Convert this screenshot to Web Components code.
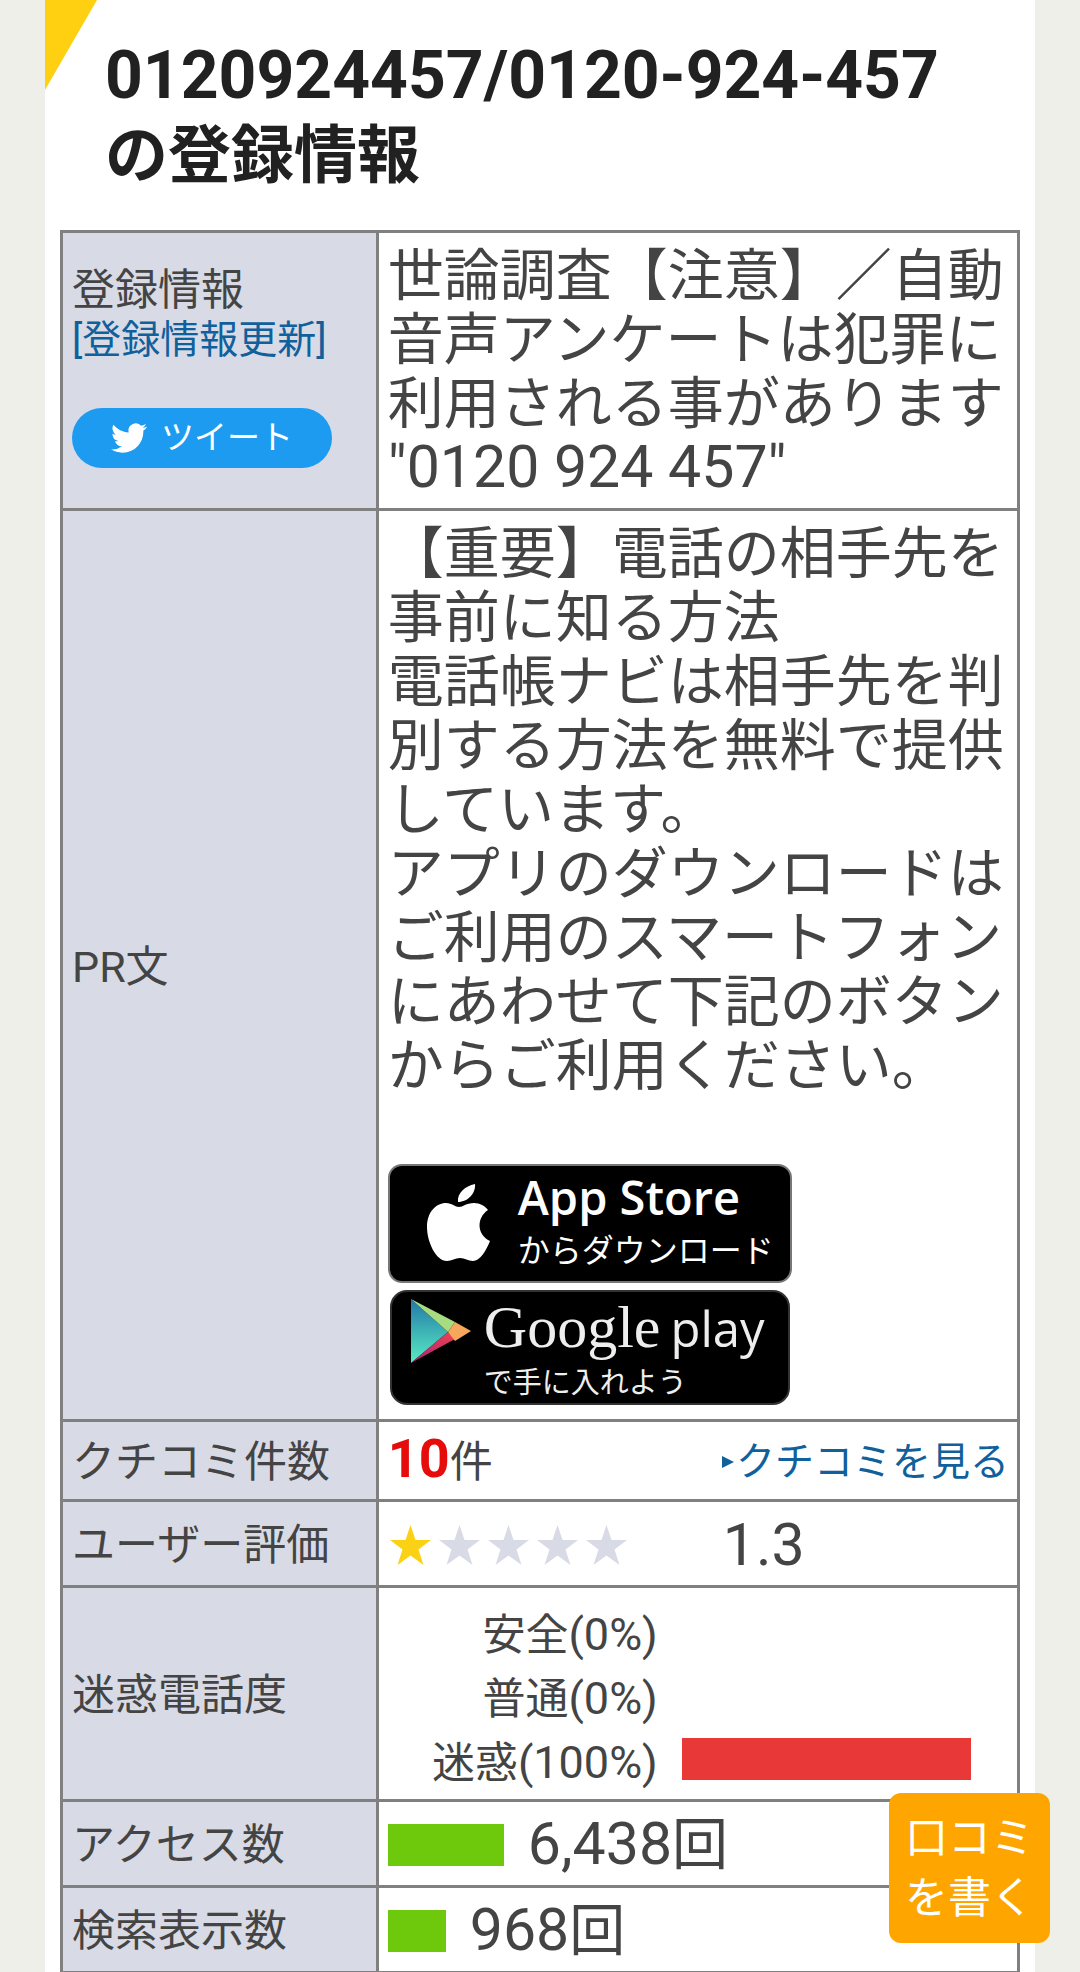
<!DOCTYPE html>
<html lang="ja">
<head>
  <meta charset="utf-8">
  <meta name="viewport" content="width=device-width, initial-scale=1">
  <title>0120924457/0120-924-457の登録情報</title>
  <style>
    body {
      margin: 0;
      background: #eeefe8;
      color: #444;
      font-family: Roboto, "Noto Sans CJK JP", sans-serif;
      font-size: 56px;
      line-height: 64px;
      text-spacing-trim: space-all;
    }
  </style>
</head>
<body>
  <phone-page>
    <page-title slot="title" number="0120924457/0120-924-457">の登録情報</page-title>
    <phone-info></phone-info>
  </phone-page>
  <review-button></review-button>

  <script>
    (function () {
      // registers an element whose shadow root is cloned from a template
      function define(name, html, setup) {
        const template = document.createElement('template')
        template.innerHTML = html
        customElements.define(name, class extends HTMLElement {
          constructor() {
            super()
            this.attachShadow({ mode: 'open' })
            this.shadowRoot.appendChild(template.content.cloneNode(true))
          }

          connectedCallback() {
            if (setup) setup(this, this.shadowRoot)
          }
        })
      }

      define('phone-page', `
        <style>
          :host {
            display: block;
            padding: 0 45px;
          }

          main {
            position: relative;
            padding: 0 15px;
            background: #fff;
          }

          .corner {
            position: absolute;
            top: 0;
            left: 0;
            width: 52px;
            height: 90px;
            background: #ffd012;
            clip-path: polygon(0 0, 100% 0, 0 100%);
          }
        </style>

        <main>
          <div class="corner"></div>
          <slot name="title"></slot>
          <slot></slot>
        </main>
      `)

      define('page-title', `
        <style>
          :host {
            display: block;
            padding: 36px 45px 34px;
          }

          h1 {
            margin: 0;
            color: #212121;
            font-size: 63px;
            line-height: 80px;
          }

          span {
            display: block;
            font-size: 66px;
          }
        </style>

        <h1><span></span><slot></slot></h1>
      `, (host, root) => {
        root.querySelector('span').textContent = host.getAttribute('number')
      })

      define('tweet-button', `
        <style>
          :host {
            display: block;
          }

          button {
            display: flex;
            align-items: center;
            justify-content: center;
            gap: 14px;
            width: 260px;
            height: 60px;
            padding: 0;
            border: 0;
            border-radius: 30px;
            background: #1d9bf0;
            color: #fff;
            font: inherit;
            font-size: 33px;
            line-height: 44px;
          }

          svg {
            width: 36px;
            height: 36px;
            fill: currentColor;
          }
        </style>

        <button type="button">
          <svg viewBox="0 0 24 24" aria-hidden="true">
            <path d="M23.95 4.57a10 10 0 0 1-2.82.78 4.96 4.96 0 0 0 2.16-2.72c-.95.55-2 .96-3.13 1.18a4.92 4.92 0 0 0-8.38 4.48C7.69 8.1 4.07 6.13 1.64 3.16a4.92 4.92 0 0 0 1.52 6.57 4.9 4.9 0 0 1-2.23-.61v.06a4.92 4.92 0 0 0 3.95 4.83 5 5 0 0 1-2.21.08 4.94 4.94 0 0 0 4.6 3.42A9.87 9.87 0 0 1 0 19.54a13.99 13.99 0 0 0 7.56 2.21c9.05 0 14-7.5 14-13.98 0-.21 0-.42-.02-.63a9.94 9.94 0 0 0 2.46-2.55z"/>
          </svg>
          <slot></slot>
        </button>
      `)

      define('app-store-badge', `
        <style>
          :host {
            display: block;
          }

          a {
            box-sizing: border-box;
            display: flex;
            align-items: center;
            gap: 28px;
            width: 404px;
            height: 119px;
            padding: 0 0 2px 36px;
            border: 2px solid #777;
            border-radius: 14px;
            background: #000;
            color: #fff;
            text-decoration: none;
          }

          svg {
            width: 64px;
            height: 80px;
            fill: #fff;
          }

          span {
            display: block;
            white-space: nowrap;
          }

          .store {
            font: 600 47px/56px "Open Sans", sans-serif;
          }

          .note {
            font-size: 32px;
            line-height: 52px;
          }
        </style>

        <a href="#app-store">
          <svg viewBox="0 0 64 80" aria-hidden="true">
            <path d="M49 1c1 9-7 18-17 18C31 10 39 3 49 1zM33 24c4 0 7-4 15-4 6 0 11 3 14 7-12 8-11 25 2 31-4 10-10 20-17 20-5 0-8-3-13-3s-8 3-13 3C10 78 1 59 1 44 1 29 10 20 20 20c6 0 9 4 13 4z"/>
          </svg>
          <div>
            <span class="store">App Store</span>
            <span class="note">からダウンロード</span>
          </div>
        </a>
      `)

      define('google-play-badge', `
        <style>
          :host {
            display: block;
          }

          a {
            box-sizing: border-box;
            display: flex;
            align-items: flex-start;
            gap: 13px;
            width: 400px;
            height: 115px;
            margin-left: 2px;
            padding: 7px 0 0 19px;
            border: 2px solid #333;
            border-radius: 17px;
            background: #000;
            color: #eee;
            text-decoration: none;
          }

          svg {
            width: 60px;
            height: 64px;
          }

          span {
            display: block;
            white-space: nowrap;
          }

          .store {
            display: flex;
            align-items: baseline;
            gap: 10px;
            height: 64px;
            font: 60px/56px "Liberation Serif", serif;
          }

          .play {
            font: 49px/56px "Open Sans", sans-serif;
          }

          .note {
            font-size: 29px;
            line-height: 40px;
          }
        </style>

        <a href="#google-play">
          <svg viewBox="0 0 60 64" aria-hidden="true">
            <defs>
              <linearGradient id="blue" x1="0" y1="0" x2="0" y2="1">
                <stop offset="0" stop-color="#2377a8"/>
                <stop offset="1" stop-color="#58edc2"/>
              </linearGradient>
              <linearGradient id="red" x1="1" y1="0" x2="0" y2="1">
                <stop offset="0" stop-color="#ee4250"/>
                <stop offset="1" stop-color="#a52179"/>
              </linearGradient>
            </defs>
            <path fill="url(#blue)" d="M0 0l37 33L0 64z"/>
            <path fill="#a8dc80" d="M0 0l44 23-7 10z"/>
            <path fill="url(#red)" d="M37 33l7 7L0 64z"/>
            <path fill="#f6a75b" d="M44 23l16 9-16 10-7-9z"/>
          </svg>
          <div>
            <span class="store">Google <span class="play">play</span></span>
            <span class="note">で手に入れよう</span>
          </div>
        </a>
      `)

      define('star-rating', `
        <style>
          :host {
            display: flex;
            gap: 8px;
          }

          svg {
            width: 41px;
            height: 40px;
            fill: #d8dbe5;
          }

          svg.on {
            fill: #fbd116;
          }
        </style>
      `, (host, root) => {
        const value = Math.floor(host.getAttribute('value'))
        for (let i = 0; i < 5; i++) {
          root.innerHTML += `
            <svg class="${i < value ? 'on' : ''}" viewBox="0 0 41 40" aria-hidden="true">
              <path d="M20.500 0l5 15H41L28.500 24.500 33.500 40l-13-9.500L7.500 40l5-15.500L0 15h15.500z"/>
            </svg>
          `
        }
      })

      define('meter-bar', `
        <style>
          :host {
            display: block;
            flex: none;
            height: 42px;
            background: var(--bar-color, #6ec80c);
          }
        </style>
      `, host => {
        host.style.width = host.getAttribute('width')
      })

      define('phone-info', `
        <style>
          :host {
            display: block;
          }

          table {
            width: 100%;
            border-collapse: collapse;
          }

          th,
          td {
            padding: 11px 8px 8px 9px;
            border: 3px solid #808080;
            text-align: left;
          }

          th {
            width: 33%;
            box-sizing: border-box;
            background: #d8dbe5;
            font-size: 43px;
            line-height: 50px;
            font-weight: normal;
          }

          a {
            color: #10609c;
            text-decoration: none;
          }

          p {
            margin: 0;
          }

          .update {
            display: block;
            margin-bottom: 43px;
            font-size: 39px;
          }

          tweet-button {
            margin-bottom: 12px;
          }

          .num {
            font-size: 59px;
            line-height: 0;
          }

          .badges {
            display: grid;
            gap: 7px;
            padding: 66px 0 6px;
          }

          .reviews,
          .rating,
          .count {
            display: flex;
            align-items: center;
          }

          .reviews {
            justify-content: space-between;
            font-size: 43px;
            line-height: 58px;
          }

          .reviews b {
            color: #e60c0c;
            font-size: 54px;
            line-height: 0;
          }

          .reviews a {
            display: flex;
            align-items: center;
            gap: 2px;
            font-size: 39px;
          }

          .reviews svg {
            width: 12px;
            height: 12px;
            fill: currentColor;
          }

          .rating {
            gap: 96px;
            min-height: 64px;
            padding-left: 2px;
          }

          .levels {
            display: grid;
            grid-template-columns: 270px 1fr;
            align-items: center;
            gap: 0 24px;
            margin: 0 38px 0 0;
          }

          .levels dt {
            text-align: right;
            white-space: nowrap;
          }

          .levels dd {
            margin: 0;
          }

          .levels small {
            font-size: 43px;
            line-height: 0;
          }

          .levels .num {
            font-size: 45px;
          }

          .levels meter-bar {
            --bar-color: #e93838;
          }

          .count {
            gap: 24px;
          }
        </style>

        <table>
          <tr>
            <th scope="row">
              登録情報
              <a class="update" href="#update">[登録情報更新]</a>
              <tweet-button>ツイート</tweet-button>
            </th>
            <td>
              世論調査【注意】／自動音声アンケートは犯罪に利用される事があります<br><span class="num">"0120 924 457"</span>
            </td>
          </tr>
          <tr>
            <th scope="row">PR文</th>
            <td>
              <p>【重要】電話の相手先を事前に知る方法</p>
              <p>電話帳ナビは相手先を判別する方法を無料で提供しています。</p>
              <p>アプリのダウンロードはご利用のスマートフォンにあわせて下記のボタンからご利用ください。</p>
              <div class="badges">
                <app-store-badge></app-store-badge>
                <google-play-badge></google-play-badge>
              </div>
            </td>
          </tr>
          <tr>
            <th scope="row">クチコミ件数</th>
            <td>
              <div class="reviews">
                <span><b>10</b>件</span>
                <a href="#reviews">
                  <svg viewBox="0 0 12 12" aria-hidden="true"><path d="M0 0l12 6-12 6z"/></svg>
                  クチコミを見る
                </a>
              </div>
            </td>
          </tr>
          <tr>
            <th scope="row">ユーザー評価</th>
            <td>
              <div class="rating">
                <star-rating value="1.3"></star-rating>
                <span class="num">1.3</span>
              </div>
            </td>
          </tr>
          <tr>
            <th scope="row">迷惑電話度</th>
            <td>
              <dl class="levels">
                <dt><small>安全<span class="num">(0%)</span></small></dt>
                <dd><meter-bar width="0%"></meter-bar></dd>
                <dt><small>普通<span class="num">(0%)</span></small></dt>
                <dd><meter-bar width="0%"></meter-bar></dd>
                <dt><small>迷惑<span class="num">(100%)</span></small></dt>
                <dd><meter-bar width="100%"></meter-bar></dd>
              </dl>
            </td>
          </tr>
          <tr>
            <th scope="row">アクセス数</th>
            <td>
              <div class="count">
                <meter-bar width="116px"></meter-bar>
                <span><span class="num">6,438</span>回</span>
              </div>
            </td>
          </tr>
          <tr>
            <th scope="row">検索表示数</th>
            <td>
              <div class="count">
                <meter-bar width="58px"></meter-bar>
                <span><span class="num">968</span>回</span>
              </div>
            </td>
          </tr>
        </table>
      `)

      // stays over the page while it scrolls
      define('review-button', `
        <style>
          :host {
            position: fixed;
            right: 30px;
            bottom: 29px;
          }

          button {
            padding: 15px 16px;
            border: 0;
            border-radius: 12px;
            background: #ffa500;
            color: #fff;
            font: inherit;
            font-size: 43px;
            line-height: 60px;
          }
        </style>

        <button type="button">口コミ<br>を書く</button>
      `)
    })()
  </script>
</body>
</html>
